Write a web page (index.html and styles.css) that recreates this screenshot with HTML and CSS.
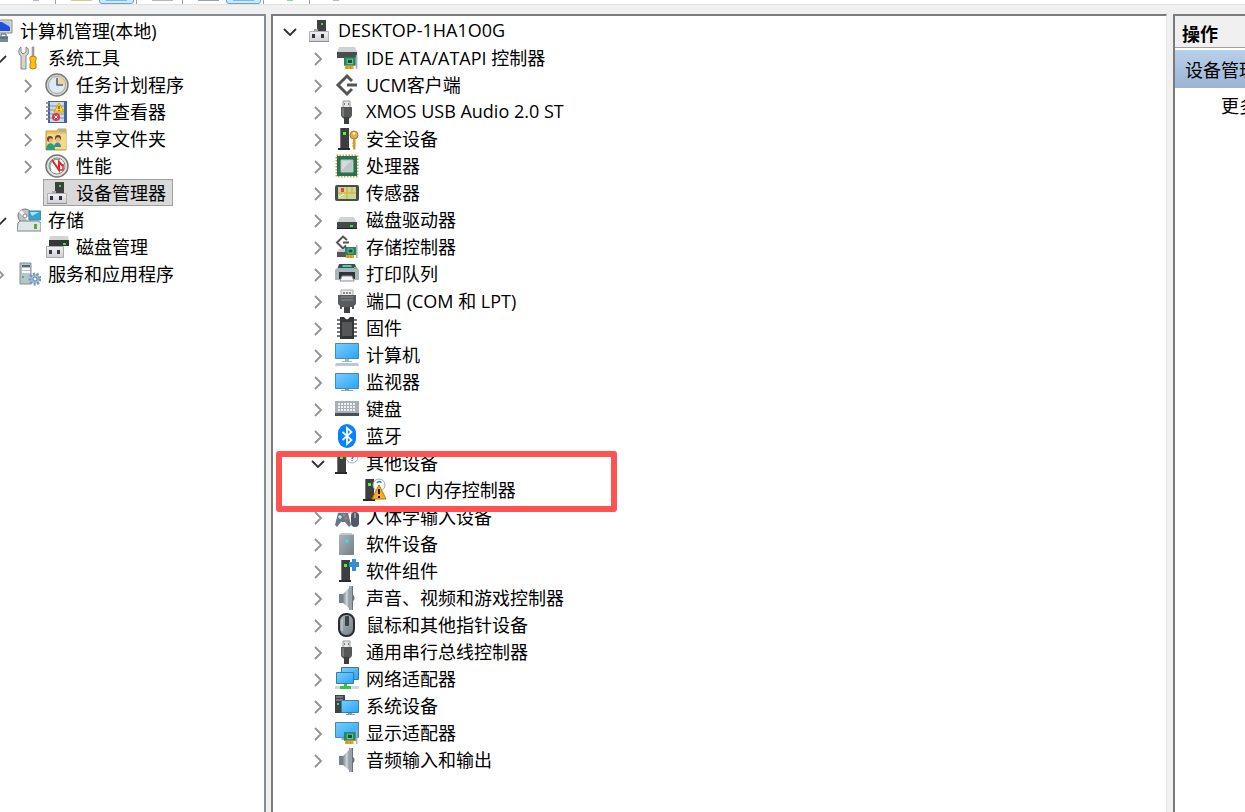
FILE: index.html
```html
<!DOCTYPE html>
<html lang="zh-CN">
<head>
    <meta charset="UTF-8">
    <title>计算机管理</title>
    <link rel="stylesheet" href="styles.css">
</head>
<body>

<!-- icons -->
<svg class="sprite" aria-hidden="true">
    <defs>
        <linearGradient id="gScreen" x1="0" y1="0" x2="1" y2="1"><stop offset="0" stop-color="#78ceff"/><stop offset="1" stop-color="#2ba3f5"/></linearGradient>
        <linearGradient id="gMetal" x1="0" y1="0" x2="1" y2="0"><stop offset="0" stop-color="#80868a"/><stop offset=".55" stop-color="#d3d8db"/><stop offset="1" stop-color="#777e84"/></linearGradient>
        <linearGradient id="gLight" x1="0" y1="0" x2="0" y2="1"><stop offset="0" stop-color="#f1f1f3"/><stop offset="1" stop-color="#cfd0d5"/></linearGradient>
        <linearGradient id="gCase" x1="0" y1="0" x2="1" y2="1"><stop offset="0" stop-color="#aeb7be"/><stop offset="1" stop-color="#747f88"/></linearGradient>
    </defs>

    <symbol id="right" viewBox="0 0 24 24"><path d="M9 7l6 6-6 6" fill="none" stroke="#929292" stroke-width="1.8"/></symbol>
    <symbol id="down" viewBox="0 0 24 24"><path d="M6 10l6 6 6-6" fill="none" stroke="#303030" stroke-width="1.8"/></symbol>

    <symbol id="tower" viewBox="0 0 12 24"><path d="M2 1h9v20H2z" fill="#3d3e3f"/><path d="M2 1h1v20H2z" fill="#777"/><path d="M5 5h3v3H5z" fill="#3dff36"/><path d="M0 21h12v2H0z" fill="#292a2b"/></symbol>
    <symbol id="card" viewBox="0 0 14 13"><path d="M0 2h11v8H0z" fill="#23845e"/><path d="M3 4h5v4H3z" fill="#164f3a" stroke="#6cc498"/><path d="M11 0h1.500v13H11z" fill="#a9b0b0"/><path d="M1 10h8v3H1z" fill="#f2a51e"/><path d="M3 10v3M6 10v3" stroke="#bd7508" stroke-width=".7"/></symbol>

    <symbol id="devmgr" viewBox="0 0 24 24"><path d="M10 1h9v12h-9z" fill="#3e3f41"/><path d="M14 4h2v2h-2z" fill="#3ddd35"/><path d="M7 10h4v3H7z" fill="#a9a9ad"/><path d="M2.500 12.500h19v10h-19z" fill="url(#gLight)" stroke="#b1b1b5"/><path d="M2 22h20v1H2z" fill="#8e8e93"/><path d="M5 15h3v4H5zM14 15h3v4h-3z" fill="#303236"/></symbol>
    <symbol id="mgmt" viewBox="0 0 24 24"><path d="M6 1h17v13H6z" fill="#d9d6c7" stroke="#8d8c86"/><path d="M7 3h14v9H7z" fill="#254ed8"/><path d="M13 3h8v5z" fill="#9cc9ff"/><path d="M9 17h10v6H9z" fill="#758d99"/><path d="M12 17v-2h5v2M9 19h10" fill="none" stroke="#455b68"/></symbol>
    <symbol id="tools" viewBox="0 0 24 24"><path d="M4 1v5l2 2 3-2V1c4 2 3 7 0 9v13H4V10C1 8 1 3 4 1z" fill="#d3d5d5" stroke="#858787"/><path d="M15 1h2v11h-2z" fill="#aaa" stroke="#777" stroke-width=".5"/><path d="M13 11l3-1 3 1v3l-1 2 1 2v4l-3 1-3-1v-4l1-2-1-2z" fill="#ffbe18" stroke="#c77b00"/></symbol>
    <symbol id="clock" viewBox="0 0 24 24"><circle cx="12" cy="12" r="11" fill="#d6d6d3" stroke="#7c7c7a" stroke-width="1.500"/><circle cx="12" cy="12" r="8.500" fill="#dceaf3" stroke="#a4a5a5"/><path d="M12 12V4a8 8 0 0 1 8 8z" fill="#f2d49b"/><path d="M12 5v7h6" fill="none" stroke="#526a80" stroke-width="1.600"/></symbol>
    <symbol id="events" viewBox="0 0 24 24"><path d="M3 1h19v22H3z" fill="#42639b"/><path d="M5 2h14v20H5z" fill="#cbd9ea"/><path d="M5 6h14M5 10h14M5 14h14M5 18h14" stroke="#7a92b6"/><path d="M1 3h4M1 7h4M1 11h4M1 15h4M1 19h4" stroke="#797f88" stroke-width="1.500"/><path d="M14 3l5 9H9z" fill="#ffd829" stroke="#d6a400"/><path d="M14 6v3M14 10v1" stroke="#222"/><circle cx="11" cy="17" r="4" fill="#d83b48"/><path d="M9.500 15.500l3 3m0-3l-3 3" stroke="#fff"/></symbol>
    <symbol id="shared" viewBox="0 0 24 24"><path d="M1 4h11l1-2h8v21H1z" fill="#e9c364" stroke="#c49d46"/><path d="M14 3h6v2h-6z" fill="#87b7dd"/><path d="M2 7h19v15H2z" fill="#f5d987"/><circle cx="5" cy="12" r="3" fill="#704626"/><circle cx="13" cy="11" r="3" fill="#704626"/><circle cx="6" cy="13.500" r="2.200" fill="#edb98b"/><circle cx="13" cy="12.500" r="2.200" fill="#edb98b"/><path d="M1 23c0-9 9-9 9 0z" fill="#26a276"/><path d="M9 20c0-6 7-6 7 0z" fill="#3988a2"/></symbol>
    <symbol id="perf" viewBox="0 0 24 24"><circle cx="12" cy="12" r="11" fill="#e4e4e1" stroke="#777" stroke-width="1.500"/><circle cx="12" cy="12" r="8" fill="#fff" stroke="#888"/><path d="M6 16a7 7 0 0 1 9-10" fill="none" stroke="#7eaa93" stroke-width="1.500"/><path d="M7 6l7 10V8l4 4" fill="none" stroke="#e5252b" stroke-width="2"/><path d="M14 16h4v-6" fill="none" stroke="#e5252b" stroke-width="1.500"/></symbol>
    <symbol id="storage" viewBox="0 0 24 24"><circle cx="8" cy="8" r="7" fill="#bfc3c5" stroke="#777"/><path d="M8 8L3 3M8 8l5 5" stroke="#eff4f4" stroke-width="3"/><circle cx="8" cy="8" r="2" fill="#f8f8f8" stroke="#888"/><path d="M12 3h12v9H12z" fill="#38a5cf" stroke="#398ba9"/><path d="M13 4h9l-7 4z" fill="#a6e5f5"/><path d="M1 15l2-2h18l3 2v8H0z" fill="#e1e5e5" stroke="#7b8586"/><path d="M17 16h3v5h-3z" fill="#4fad3d"/></symbol>
    <symbol id="diskmgmt" viewBox="0 0 24 24"><path d="M5 1h18l1 5H4z" fill="#d2d3d4"/><path d="M4 5h20v6H4z" fill="#343738"/><path d="M18 8h3v2h-3z" fill="#34e449"/><path d="M1.500 11.500h17v11h-17z" fill="url(#gLight)" stroke="#aaa"/><path d="M4 15h3v4H4zM12 15h3v4h-3z" fill="#37393b"/></symbol>
    <symbol id="services" viewBox="0 0 24 24"><path d="M3 1h11v21H3z" fill="#b8c4cd" stroke="#82909b"/><path d="M5 3h8v2H5z" fill="#536674"/><path d="M5 7h8M5 10h8" stroke="#fff" stroke-width="2"/><path d="M5 14h2v2H5z" fill="#3dbf65"/><circle cx="18" cy="17" r="5" fill="#a8c2d9" stroke="#7399bc" stroke-width="3" stroke-dasharray="2 1.500"/><circle cx="18" cy="17" r="2" fill="#fff" stroke="#527eab"/></symbol>

    <symbol id="ide" viewBox="0 0 24 24"><path d="M4 1h16l2 5H2z" fill="#cfd0d1"/><path d="M2 6h20v6H2z" fill="#494c4d"/><use href="#card" x="9" y="9" width="15" height="14"/></symbol>
    <symbol id="ucm" viewBox="0 0 24 24"><path d="M17 8l-5-5-9 9 9 9 5-5M12 12h10" fill="none" stroke="#555" stroke-width="3"/></symbol>
    <symbol id="usb" viewBox="0 0 24 24"><path d="M8 1h7v7H8z" fill="#e5e5e5" stroke="#999"/><path d="M9.500 3v2M13.500 3v2" stroke="#777"/><path d="M6 7h11v8c0 2-3 4-4 4h-3c-1 0-4-2-4-4z" fill="#555758"/><path d="M7 8h2v8H7z" fill="#77797a"/><path d="M9 17h5v7H9z" fill="#3c3d3e"/></symbol>
    <symbol id="security" viewBox="0 0 24 24"><use href="#tower" x="3" width="12" height="24"/><circle cx="19" cy="8" r="4" fill="#e6af45" stroke="#ad7b27"/><circle cx="19" cy="6.500" r="1.200" fill="#fff"/><path d="M18 12h2.500v10l-1.500 1-1-1z" fill="#d8982b"/><path d="M17 16h2M17 19h2" stroke="#d8982b"/></symbol>
    <symbol id="cpu" viewBox="0 0 24 24"><path d="M1.500 1.500h21v21h-21z" fill="none" stroke="#cda43b" stroke-width="2" stroke-dasharray="1.500 1.500"/><path d="M2 2h20v20H2z" fill="#287251"/><path d="M6 6h12v12H6z" fill="#d8dbd9" stroke="#a7c3b4"/><path d="M7 16L16 7h1v10H7z" fill="#bfc5c2"/></symbol>
    <symbol id="sensor" viewBox="0 0 24 24"><rect y="4" width="24" height="16" rx="2" fill="#4b4b4b"/><path d="M3 6h18v12H3z" fill="#c3dc94"/><path d="M3 12h18M12 6v12M17 6v6" stroke="#e5b13e" stroke-width="1.500"/><path d="M6 7h3v4H6z" fill="#e34350"/><path d="M4 16l5-3" stroke="#fff"/></symbol>
    <symbol id="disk" viewBox="0 0 24 24"><path d="M5 9h14l3 6H2z" fill="#d1d2d2"/><path d="M2 14h20v7H2z" fill="#45494a"/><path d="M15 17h3v2h-3z" fill="#32e847"/><path d="M2 20h20v1H2z" fill="#222"/></symbol>
    <symbol id="storagectl" viewBox="0 0 24 24"><path d="M12 5L8 1.500 2 7.500l6 6 3-3M8 7.500h6" fill="none" stroke="#555" stroke-width="2"/><path d="M4 14h14l3 3H2z" fill="#ccc"/><path d="M2 17h14v5H2z" fill="#555"/><use href="#card" x="10" y="10" width="14" height="13"/></symbol>
    <symbol id="printer" viewBox="0 0 24 24"><path d="M4 2h16l2 6H2z" fill="#414c52"/><path d="M8 3h8l1 2H7z" fill="#35d8b2"/><path d="M0 8l2-2h20l2 2v10H0z" fill="#a9b4bd"/><path d="M19 5h3v2h-3z" fill="#40e247"/><path d="M4 10h16v7H4z" fill="#303438"/><path d="M7 14h10l2 5H5z" fill="#f4f4f4" stroke="#8b9197"/></symbol>
    <symbol id="port" viewBox="0 0 24 24"><path d="M6 1h12v6H6z" fill="#ececec" stroke="#aaa"/><path d="M8 3h2v2H8zM11 3h2v2h-2zM14 3h2v2h-2z" fill="#888"/><path d="M3 6h18v9l-3 3H6l-3-3z" fill="#5a5b5c"/><path d="M6 8h12M6 11h12" stroke="#8a8c8d"/><path d="M9 18h6v6H9z" fill="#414243"/><path d="M6 16v4M18 16v4" stroke="#555" stroke-width="2"/></symbol>
    <symbol id="firmware" viewBox="0 0 24 24"><path d="M2 4h20M2 8h20M2 12h20M2 16h20M2 20h20" stroke="#777" stroke-width="2"/><path d="M5 1h4l3 3 3-3h4v22H5z" fill="#343536"/><path d="M7 6h10v14H7z" fill="#555657"/></symbol>
    <symbol id="computer" viewBox="0 0 24 24"><path d="M.5.500h23v15H.5z" fill="url(#gScreen)" stroke="#4789b3"/><path d="M10 16h4v2h3v1H7v-1h3z" fill="#a4bac8"/><path d="M1 20h22l1 3H0z" fill="#bcc8cf"/></symbol>
    <symbol id="monitor" viewBox="0 0 24 24"><path d="M.5 3.500h23v15H.5z" fill="url(#gScreen)" stroke="#4789b3"/><path d="M10 19h4v1h4v1H6v-1h4z" fill="#82a2b8"/></symbol>
    <symbol id="keyboard" viewBox="0 0 24 24"><path d="M0 4h24v15H0z" fill="#a9b0b6"/><path d="M3 7h18M3 10h18M3 13h18" stroke="#eef1f2" stroke-width="1.800" stroke-dasharray="2 1"/><path d="M0 16h24v3H0z" fill="#465058"/></symbol>
    <symbol id="bluetooth" viewBox="0 0 24 24"><rect x="3" width="18" height="24" rx="9" fill="#0783ff"/><path d="M7.500 8l9 8-4.500 4V4l4.500 4-9 8" fill="none" stroke="#fff" stroke-width="1.700"/></symbol>
    <symbol id="other" viewBox="0 0 24 24"><use href="#tower" width="12" height="24"/><circle cx="17" cy="6" r="6" fill="#f8f8f8" stroke="#aaa"/><path d="M15 5c0-3 4-3 4 0 0 1-2 1-2 3m0 1v1" fill="none" stroke="#2e82d0" stroke-width="1.500"/></symbol>
    <symbol id="pci" viewBox="0 0 24 24"><use href="#tower" width="12" height="24"/><circle cx="16" cy="7" r="6" fill="#f8f8f8" stroke="#aaa"/><path d="M14 5c1-2 4-2 4 0" fill="none" stroke="#2e82d0" stroke-width="1.500"/><path d="M16 7l7 14H9z" fill="#f4ad25" stroke="#b97500"/><path d="M16 11v5M16 18v2" stroke="#251b00" stroke-width="2"/></symbol>
    <symbol id="hid" viewBox="0 0 24 24"><path d="M3 1h18v8H3z" fill="#dedfe0"/><path d="M4 4h16M4 7h16" stroke="#aaa" stroke-dasharray="2 1"/><path d="M0 20L3 8h10l3 12-2 2-4-5H6l-4 5z" fill="#687784"/><rect x="16" y="7" width="8" height="15" rx="4" fill="#4f5c67"/><path d="M20 8v5" stroke="#ccd4db"/><path d="M5 10v4M3 12h4" stroke="#fff"/><circle cx="9" cy="10" r="1.500" fill="#37a8ff"/><circle cx="11" cy="13" r="1.500" fill="#ed6547"/></symbol>
    <symbol id="software" viewBox="0 0 24 24"><path d="M4 3l3-2h9l3 2v20H4z" fill="url(#gCase)"/><path d="M4 3l3-2h9l3 2z" fill="#c1c8cd"/><circle cx="12" cy="9" r="2" fill="#42d6e8"/></symbol>
    <symbol id="component" viewBox="0 0 24 24"><use href="#tower" x="4" width="12" height="24"/><path d="M17 0h4v3h3v5h-3v4h-4V8h-3V3h3z" fill="#358ed0"/></symbol>
    <symbol id="speaker" viewBox="0 0 24 24"><path d="M4 8h5v9H4z" fill="#76818a"/><path d="M8 8l7-7v22l-7-6z" fill="url(#gMetal)"/><path d="M14 0h4v24h-4z" fill="#98a2aa"/><path d="M17 0h1v24h-1z" fill="#68747d"/><path d="M18 9c2 1 2 5 0 6z" fill="#68747d"/></symbol>
    <symbol id="mouse" viewBox="0 0 24 24"><rect x="4" y="1" width="15" height="22" rx="7" fill="url(#gCase)" stroke="#282c30" stroke-width="2"/><rect x="10" y="3" width="4" height="10" rx="1" fill="#3b4248"/><path d="M7 6v12" stroke="#c8d3dc"/></symbol>
    <symbol id="network" viewBox="0 0 24 24"><path d="M6.500.500h17v12h-17z" fill="url(#gScreen)" stroke="#347ca8"/><path d="M1.500 5.500h17v11h-17z" fill="url(#gScreen)" stroke="#347ca8"/><path d="M0 19h24v3H0z" fill="#d3d8da"/><path d="M9 17h3v2h4v3H5v-3h4z" fill="#3bc443"/></symbol>
    <symbol id="system" viewBox="0 0 24 24"><path d="M0 1h10v18H0z" fill="#3e4347"/><path d="M1 3h7M1 6h7" stroke="#aab0b4"/><path d="M2 9h2v2H2z" fill="#43e253"/><path d="M6.500 6.500h17v12h-17z" fill="url(#gScreen)" stroke="#3680ac"/><path d="M13 19h4v1h3v1h-9v-1h2z" fill="#809aad"/></symbol>
    <symbol id="display" viewBox="0 0 24 24"><path d="M.5 1.500h23v15H.5z" fill="url(#gScreen)" stroke="#4789b3"/><path d="M7 17h3v2H6z" fill="#99aab5"/><use href="#card" x="9" y="9" width="15" height="14"/></symbol>
</svg>

<div class="app">
    <div class="toolbar">
        <button type="button" aria-label="前进"><i class="small"></i></button>
        <span class="sep"></span>
        <button type="button" aria-label="向上"><i class="tan"></i></button>
        <button type="button" class="on" aria-label="显示控制台树"><i class="blue"></i></button>
        <span class="sep"></span>
        <button type="button" aria-label="属性"><i></i></button>
        <span class="sep"></span>
        <button type="button" aria-label="帮助"><i class="navy"></i></button>
        <button type="button" class="on" aria-label="显示操作窗格"><i class="blue"></i></button>
        <span class="sep"></span>
        <button type="button" aria-label="扫描"><i class="small green"></i></button>
        <span class="sep"></span>
        <button type="button" aria-label="更多"><i class="small"></i></button>
    </div>

    <div class="panes">
        <nav class="pane console">
            <ul class="tree">
                <li>
                    <div class="row"><span class="toggle"></span><a href="#" class="node"><svg><use href="#mgmt"/></svg>计算机管理(本地)</a></div>
                    <ul>
                        <li>
                            <div class="row"><button type="button" class="toggle" aria-label="折叠"><svg><use href="#down"/></svg></button><a href="#" class="node"><svg><use href="#tools"/></svg>系统工具</a></div>
                            <ul>
                                <li class="row"><button type="button" class="toggle" aria-label="展开"><svg><use href="#right"/></svg></button><a href="#" class="node"><svg><use href="#clock"/></svg>任务计划程序</a></li>
                                <li class="row"><button type="button" class="toggle" aria-label="展开"><svg><use href="#right"/></svg></button><a href="#" class="node"><svg><use href="#events"/></svg>事件查看器</a></li>
                                <li class="row"><button type="button" class="toggle" aria-label="展开"><svg><use href="#right"/></svg></button><a href="#" class="node"><svg><use href="#shared"/></svg>共享文件夹</a></li>
                                <li class="row"><button type="button" class="toggle" aria-label="展开"><svg><use href="#right"/></svg></button><a href="#" class="node"><svg><use href="#perf"/></svg>性能</a></li>
                                <li class="row"><span class="toggle"></span><a href="#" class="node selected"><svg><use href="#devmgr"/></svg>设备管理器</a></li>
                            </ul>
                        </li>
                        <li>
                            <div class="row"><button type="button" class="toggle" aria-label="折叠"><svg><use href="#down"/></svg></button><a href="#" class="node"><svg><use href="#storage"/></svg>存储</a></div>
                            <ul>
                                <li class="row"><span class="toggle"></span><a href="#" class="node"><svg><use href="#diskmgmt"/></svg>磁盘管理</a></li>
                            </ul>
                        </li>
                        <li class="row"><button type="button" class="toggle" aria-label="展开"><svg><use href="#right"/></svg></button><a href="#" class="node"><svg><use href="#services"/></svg>服务和应用程序</a></li>
                    </ul>
                </li>
            </ul>
        </nav>

        <main class="pane devices">
            <ul class="tree">
                <li>
                    <div class="row"><button type="button" class="toggle" aria-label="折叠"><svg><use href="#down"/></svg></button><a href="#" class="node"><svg><use href="#devmgr"/></svg>DESKTOP-1HA1O0G</a></div>
                    <ul>
                        <li class="row"><button type="button" class="toggle" aria-label="展开"><svg><use href="#right"/></svg></button><a href="#" class="node"><svg><use href="#ide"/></svg>IDE ATA/ATAPI 控制器</a></li>
                        <li class="row"><button type="button" class="toggle" aria-label="展开"><svg><use href="#right"/></svg></button><a href="#" class="node"><svg><use href="#ucm"/></svg>UCM客户端</a></li>
                        <li class="row"><button type="button" class="toggle" aria-label="展开"><svg><use href="#right"/></svg></button><a href="#" class="node"><svg><use href="#usb"/></svg>XMOS USB Audio 2.0 ST</a></li>
                        <li class="row"><button type="button" class="toggle" aria-label="展开"><svg><use href="#right"/></svg></button><a href="#" class="node"><svg><use href="#security"/></svg>安全设备</a></li>
                        <li class="row"><button type="button" class="toggle" aria-label="展开"><svg><use href="#right"/></svg></button><a href="#" class="node"><svg><use href="#cpu"/></svg>处理器</a></li>
                        <li class="row"><button type="button" class="toggle" aria-label="展开"><svg><use href="#right"/></svg></button><a href="#" class="node"><svg><use href="#sensor"/></svg>传感器</a></li>
                        <li class="row"><button type="button" class="toggle" aria-label="展开"><svg><use href="#right"/></svg></button><a href="#" class="node"><svg><use href="#disk"/></svg>磁盘驱动器</a></li>
                        <li class="row"><button type="button" class="toggle" aria-label="展开"><svg><use href="#right"/></svg></button><a href="#" class="node"><svg><use href="#storagectl"/></svg>存储控制器</a></li>
                        <li class="row"><button type="button" class="toggle" aria-label="展开"><svg><use href="#right"/></svg></button><a href="#" class="node"><svg><use href="#printer"/></svg>打印队列</a></li>
                        <li class="row"><button type="button" class="toggle" aria-label="展开"><svg><use href="#right"/></svg></button><a href="#" class="node"><svg><use href="#port"/></svg>端口 (COM 和 LPT)</a></li>
                        <li class="row"><button type="button" class="toggle" aria-label="展开"><svg><use href="#right"/></svg></button><a href="#" class="node"><svg><use href="#firmware"/></svg>固件</a></li>
                        <li class="row"><button type="button" class="toggle" aria-label="展开"><svg><use href="#right"/></svg></button><a href="#" class="node"><svg><use href="#computer"/></svg>计算机</a></li>
                        <li class="row"><button type="button" class="toggle" aria-label="展开"><svg><use href="#right"/></svg></button><a href="#" class="node"><svg><use href="#monitor"/></svg>监视器</a></li>
                        <li class="row"><button type="button" class="toggle" aria-label="展开"><svg><use href="#right"/></svg></button><a href="#" class="node"><svg><use href="#keyboard"/></svg>键盘</a></li>
                        <li class="row"><button type="button" class="toggle" aria-label="展开"><svg><use href="#right"/></svg></button><a href="#" class="node"><svg><use href="#bluetooth"/></svg>蓝牙</a></li>
                        <li class="marked">
                            <div class="row"><button type="button" class="toggle" aria-label="折叠"><svg><use href="#down"/></svg></button><a href="#" class="node"><svg><use href="#other"/></svg>其他设备</a></div>
                            <ul>
                                <li class="row"><span class="toggle"></span><a href="#" class="node"><svg><use href="#pci"/></svg>PCI 内存控制器</a></li>
                            </ul>
                        </li>
                        <li class="row"><button type="button" class="toggle" aria-label="展开"><svg><use href="#right"/></svg></button><a href="#" class="node"><svg><use href="#hid"/></svg>人体学输入设备</a></li>
                        <li class="row"><button type="button" class="toggle" aria-label="展开"><svg><use href="#right"/></svg></button><a href="#" class="node"><svg><use href="#software"/></svg>软件设备</a></li>
                        <li class="row"><button type="button" class="toggle" aria-label="展开"><svg><use href="#right"/></svg></button><a href="#" class="node"><svg><use href="#component"/></svg>软件组件</a></li>
                        <li class="row"><button type="button" class="toggle" aria-label="展开"><svg><use href="#right"/></svg></button><a href="#" class="node"><svg><use href="#speaker"/></svg>声音、视频和游戏控制器</a></li>
                        <li class="row"><button type="button" class="toggle" aria-label="展开"><svg><use href="#right"/></svg></button><a href="#" class="node"><svg><use href="#mouse"/></svg>鼠标和其他指针设备</a></li>
                        <li class="row"><button type="button" class="toggle" aria-label="展开"><svg><use href="#right"/></svg></button><a href="#" class="node"><svg><use href="#usb"/></svg>通用串行总线控制器</a></li>
                        <li class="row"><button type="button" class="toggle" aria-label="展开"><svg><use href="#right"/></svg></button><a href="#" class="node"><svg><use href="#network"/></svg>网络适配器</a></li>
                        <li class="row"><button type="button" class="toggle" aria-label="展开"><svg><use href="#right"/></svg></button><a href="#" class="node"><svg><use href="#system"/></svg>系统设备</a></li>
                        <li class="row"><button type="button" class="toggle" aria-label="展开"><svg><use href="#right"/></svg></button><a href="#" class="node"><svg><use href="#display"/></svg>显示适配器</a></li>
                        <li class="row"><button type="button" class="toggle" aria-label="展开"><svg><use href="#right"/></svg></button><a href="#" class="node"><svg><use href="#speaker"/></svg>音频输入和输出</a></li>
                    </ul>
                </li>
            </ul>
        </main>

        <aside class="pane actions">
            <h2>操作</h2>
            <h3>设备管理器</h3>
            <a href="#">更多操作</a>
        </aside>
    </div>
</div>

</body>
</html>
```

FILE: styles.css
```css
*{margin:0;padding:0;box-sizing:border-box;}
body{
    font-family: "Open Sans", "Noto Sans CJK SC", sans-serif;
    font-size: 18px;
    color: #000;
    background: #f0f0f0;
    overflow: hidden;
}
ul{list-style:none;}
a{color:inherit;text-decoration:none;}
button{border:0;background:none;font:inherit;}
.sprite{
    position: absolute;
    width: 0;
    height: 0;
}

.app{
    height: 100vh;
    display: flex;
    flex-direction: column;
}

/* toolbar */
.toolbar{
    height: 5px;
    display: flex;
    align-items: flex-end;
    padding-left: 18px;
    background: #fff;
    border-bottom: 1px solid #e2e2e2;
    overflow: hidden;
    flex-shrink: 0;
}
.toolbar button{
    width: 35px;
    height: 32px;
    display: flex;
    align-items: flex-end;
    justify-content: center;
    padding-bottom: 3px;
    flex-shrink: 0;
}
.toolbar button.on{
    background: #cce8ff;
    border: 1px solid #5fa8dd;
    border-radius: 3px;
    padding-bottom: 2px;
}
.toolbar i{
    width: 21px;
    height: 16px;
    background: #b9b9b9;
}
.toolbar .small{width:6px;}
.toolbar .tan{background:#d8c79b;}
.toolbar .blue{background:#8db4d4;}
.toolbar .navy{background:#9a9fb4;}
.toolbar .green{background:#7ee084;}
.sep{
    width: 1px;
    height: 28px;
    margin: 0 8px 0 2px;
    background: #a0a0a0;
    flex-shrink: 0;
}

/* panes */
.panes{
    flex: 1;
    min-height: 0;
    display: flex;
    padding-top: 9px;
}
.pane{
    background: #fff;
    border-top: 2px solid #7a7c80;
    overflow: hidden;
}
.console{
    width: 266px;
    border-color: #868b92;
    border-right: 2px solid #868b92;
    flex-shrink: 0;
}
.devices{
    flex: 1;
    min-width: 0;
    margin-left: 5px;
    border-left: 2px solid #7a7a7a;
    border-right: 1px solid #e3e3e3;
}
.actions{
    width: 72px;
    margin-left: 6px;
    border-left: 2px solid #7a7a7a;
    white-space: nowrap;
    flex-shrink: 0;
}

/* tree */
.tree{
    padding-top: 1px;
    padding-left: 5px;
}
.tree ul{padding-left:28px;}
.console .tree{
    margin-left: -40px;
    padding-left: 0;
}
.row{
    display: flex;
    align-items: center;
    height: 27px;
    white-space: nowrap;
}
.row svg{
    display: block;
    width: 24px;
    height: 24px;
    flex-shrink: 0;
}
.toggle{
    width: 24px;
    height: 24px;
    margin-right: 3px;
    flex-shrink: 0;
}
.node{
    display: flex;
    align-items: center;
    gap: 7px;
    height: 27px;
    padding: 0 7px 2px 2px;
}
.node svg{margin-top:2px;}
.selected{
    background: #d9d9d9;
    outline: 1px solid #a0a0a0;
    outline-offset: -1px;
}

/* red frame round the unknown device */
.marked{position:relative;}
.marked::after{
    content: "";
    position: absolute;
    box-sizing: border-box;
    top: 2px;
    left: -30px;
    width: 341px;
    height: 61px;
    border: 6px solid #ff5252;
    border-radius: 3px;
    pointer-events: none;
}

/* actions */
.actions h2{
    height: 32px;
    padding-left: 7px;
    font-size: 18px;
    line-height: 36px;
    background: #f0f0f0;
    border-bottom: 1px solid #a0a0a0;
}
.actions h3{
    height: 38px;
    margin-top: 2px;
    padding-left: 10px;
    font-size: 18px;
    font-weight: normal;
    line-height: 40px;
    background: linear-gradient(#b9d0ea, #9ab4d3);
}
.actions a{
    display: block;
    padding-left: 46px;
    line-height: 36px;
}
```
